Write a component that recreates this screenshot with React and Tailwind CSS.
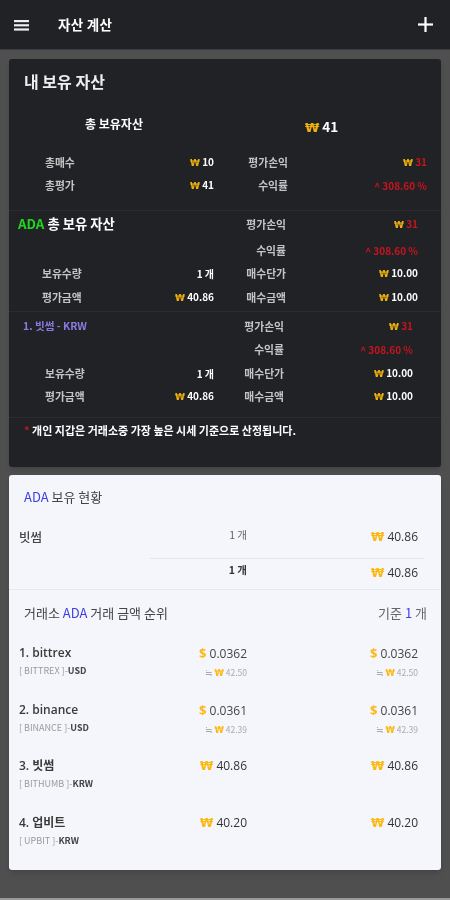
const KR = { fontFamily: '"Noto Sans CJK KR", "Noto Sans", sans-serif' };
const NUM = { fontFamily: '"Open Sans", "Noto Sans CJK KR", sans-serif' };
const SYM = { fontFamily: '"DejaVu Sans", sans-serif' };

function Won({ className = "text-[#eeb00c] text-[9px]" }) {
  return <span style={SYM} className={`font-bold ${className}`}>₩</span>;
}

function DarkRow({ space = "", left, leftClass = "", mid, midClass = "w-[74px]", right, rightClass = "pr-[14px]", children }) {
  return (
    <div className={`flex items-center h-[20px] ${space}`}>
      <div className="w-[205px] flex items-center justify-between shrink-0">
        <span className={leftClass}>{left}</span>
        <span>{children}</span>
      </div>
      <div className={`text-right shrink-0 text-[#c4c4c4] text-[10.8px] ${midClass}`}>{mid}</div>
      <div className={`flex-1 text-right ${rightClass}`}>{right}</div>
    </div>
  );
}

function Val({ children }) {
  return (
    <span className="text-white">
      <Won /> {children}
    </span>
  );
}

function Loss({ children }) {
  return <span className="text-[#c8141c]">{children}</span>;
}

function Amount({ value }) {
  return (
    <span className="text-[12px] leading-[20px] text-[#333] whitespace-nowrap" style={NUM}>
      <Won className="text-[#fdb913] text-[12px]" /> {value}
    </span>
  );
}

function Dollar({ value }) {
  return (
    <span className="text-[12px] leading-[20px] text-[#444] whitespace-nowrap" style={NUM}>
      <span className="text-[#fdb913] font-bold text-[13px]">$</span> {value}
    </span>
  );
}

function Market({ name, code, unit, price, usd, sub }) {
  const main = usd ? <Dollar value={price} /> : <Amount value={price} />;
  const below = sub ? (
    <span className="text-[8.5px] leading-[20px] -mt-[2px] text-[#aaa] whitespace-nowrap">
      ≒ <Won className="text-[#fdb913] text-[8.5px]" /> {sub}
    </span>
  ) : null;
  return (
    <div className="h-[56.7px] flex">
      <div className="w-[138px] pl-[10px] flex flex-col">
        <span className="text-[12px] leading-[20px] text-[#3a3a3a] font-semibold whitespace-nowrap" style={NUM}>{name}</span>
        <span className="text-[9px] leading-[20px] -mt-[2px] text-[#9a9a9a] whitespace-nowrap">[ {code} ]-<b className="text-[#444]">{unit}</b></span>
      </div>
      <div className="w-[100px] flex flex-col items-end">{main}{below}</div>
      <div className="w-[171px] flex flex-col items-end">{main}{below}</div>
    </div>
  );
}

export default function App() {
  const lbl = "text-[10.8px] text-[#c4c4c4]";
  return (
    <div style={KR} className="relative w-[450px] h-[900px] overflow-hidden bg-[#4f4f4f] flex flex-col blur-[0.35px]">
      <header className="h-[50px] shrink-0 bg-[#212226] flex items-center text-white border-b border-[#3c3d40]">
        <svg width="15" height="11" viewBox="0 0 15 11" className="ml-[14px] mt-[1px]" fill="#eee">
          <rect x="0" y="0" width="15" height="2.2" />
          <rect x="0" y="4.2" width="15" height="2.2" />
          <rect x="0" y="8.4" width="15" height="2.2" />
        </svg>
        <span className="ml-[29px] text-[13.5px] font-bold tracking-[0.3px]">자산 계산</span>
        <svg width="15" height="15" viewBox="0 0 15 15" className="ml-auto mr-[17px]" fill="#fff">
          <rect x="6.4" y="0" width="2.2" height="15" />
          <rect x="0" y="6.4" width="15" height="2.2" />
        </svg>
      </header>

      <section className="mt-[9px] mx-[9px] h-[408px] shrink-0 rounded-[3px] bg-[#212226] shadow-md text-[10px] font-bold text-[#c4c4c4]">
        <div className="pl-[15px] pt-[12px] text-[16px] leading-[20px] font-bold text-[#eee]">내 보유 자산</div>
        <div className="flex items-center mt-[21px] h-[24px]">
          <span className="ml-[76px] text-[12px] text-white">총 보유자산</span>
          <span className="ml-[162px] text-[13.5px] text-white mt-[5px]"><Won className="text-[#eeb00c] text-[13px]" /> 41</span>
        </div>
        <div className="border-b border-[#2b2c30] pb-[15px]">
          <DarkRow space="mt-[16px]" left="총매수" leftClass={`ml-[36px] ${lbl}`} mid="평가손익" right={<span><Won /> <Loss>31</Loss></span>}>
            <Val>10</Val>
          </DarkRow>
          <DarkRow space="mt-[3px]" left="총평가" leftClass={`ml-[36px] ${lbl}`} mid="수익률" right={<Loss>^ 308.60 %</Loss>}>
            <Val>41</Val>
          </DarkRow>
        </div>
        <div className="border-b border-[#2b2c30] pb-[4px]">
          <DarkRow space="mt-[3px]" left={<span className="text-[13.3px] text-white"><span className="text-[#1fd61f]">ADA</span> 총 보유 자산</span>} leftClass="ml-[9px]" midClass="w-[72px]" mid="평가손익" rightClass="pr-[23px]" right={<span><Won /> <Loss>31</Loss></span>} />
          <DarkRow space="mt-[6px]" midClass="w-[72px]" mid="수익률" rightClass="pr-[23px]" right={<Loss>^ 308.60 %</Loss>} />
          <DarkRow space="mt-[3px]" left="보유수량" leftClass={`ml-[33px] ${lbl}`} midClass="w-[72px]" mid="매수단가" rightClass="pr-[23px]" right={<Val>10.00</Val>}>
            <span className="text-white">1 개</span>
          </DarkRow>
          <DarkRow space="mt-[4px]" left="평가금액" leftClass={`ml-[33px] ${lbl}`} midClass="w-[72px]" mid="매수금액" rightClass="pr-[23px]" right={<Val>10.00</Val>}>
            <Val>40.86</Val>
          </DarkRow>
        </div>
        <div className="border-b border-[#2b2c30] pb-[11px]">
          <DarkRow space="mt-[4px]" left="1. 빗썸 - KRW" leftClass="ml-[14px] text-[#8a7be0] text-[10.5px]" midClass="w-[70px]" mid="평가손익" rightClass="pr-[28px]" right={<span><Won /> <Loss>31</Loss></span>} />
          <DarkRow space="mt-[3px]" midClass="w-[70px]" mid="수익률" rightClass="pr-[28px]" right={<Loss>^ 308.60 %</Loss>} />
          <DarkRow space="mt-[4px]" left="보유수량" leftClass={`ml-[36px] ${lbl}`} midClass="w-[70px]" mid="매수단가" rightClass="pr-[28px]" right={<Val>10.00</Val>}>
            <span className="text-white">1 개</span>
          </DarkRow>
          <DarkRow space="mt-[3px]" left="평가금액" leftClass={`ml-[36px] ${lbl}`} midClass="w-[70px]" mid="매수금액" rightClass="pr-[28px]" right={<Val>10.00</Val>}>
            <Val>40.86</Val>
          </DarkRow>
        </div>
        <div className="mt-[4px] pl-[15px] text-[11px] leading-[16px] text-white">
          <span className="text-[#c8141c]">*</span> 개인 지갑은 거래소중 가장 높은 시세 기준으로 산정됩니다.
        </div>
      </section>

      <section className="mt-[8px] mx-[9px] h-[395px] shrink-0 rounded-[3px] bg-[#f4f6fb] shadow-md text-[#444]">
        <div className="pl-[15px] pt-[13px] text-[13px] leading-[18px]">
          <span className="text-[#3f3fe0]">ADA</span> 보유 현황
        </div>
        <div className="mt-[19px] flex h-[24px] items-center">
          <span className="ml-[10px] w-[128px] text-[12.5px] font-medium">빗썸</span>
          <span className="w-[100px] text-right text-[10.5px] text-[#666] mb-[4px]">1 개</span>
          <span className="w-[171px] flex justify-end"><Amount value="40.86" /></span>
        </div>
        <div className="ml-[141px] mr-[17px] mt-[9px] border-t border-[#e4e6ea]" />
        <div className="flex h-[30px] items-center">
          <span className="ml-[138px] w-[100px] text-right text-[10.5px] font-bold text-[#333] mb-[8px]">1 개</span>
          <span className="w-[171px] flex justify-end mb-[3px]"><Amount value="40.86" /></span>
        </div>
        <div className="border-t border-[#e6e8ec]" />
        <div className="flex items-center justify-between h-[18px] mt-[14px] pl-[15px] pr-[14px] text-[13px]">
          <span>거래소 <span className="text-[#3f3fe0]">ADA</span> 거래 금액 순위</span>
          <span className="text-[13px] text-[#666]">기준 <span className="text-[#3f3fe0]">1</span> 개</span>
        </div>
        <div className="mt-[21px]">
          <Market name="1. bittrex" code="BITTREX" unit="USD" usd price="0.0362" sub="42.50" />
          <Market name="2. binance" code="BINANCE" unit="USD" usd price="0.0361" sub="42.39" />
          <Market name="3. 빗썸" code="BITHUMB" unit="KRW" price="40.86" />
          <Market name="4. 업비트" code="UPBIT" unit="KRW" price="40.20" />
        </div>
      </section>
      <div className="mt-auto h-[2px] bg-[#9a9a9a]" />
    </div>
  );
}
